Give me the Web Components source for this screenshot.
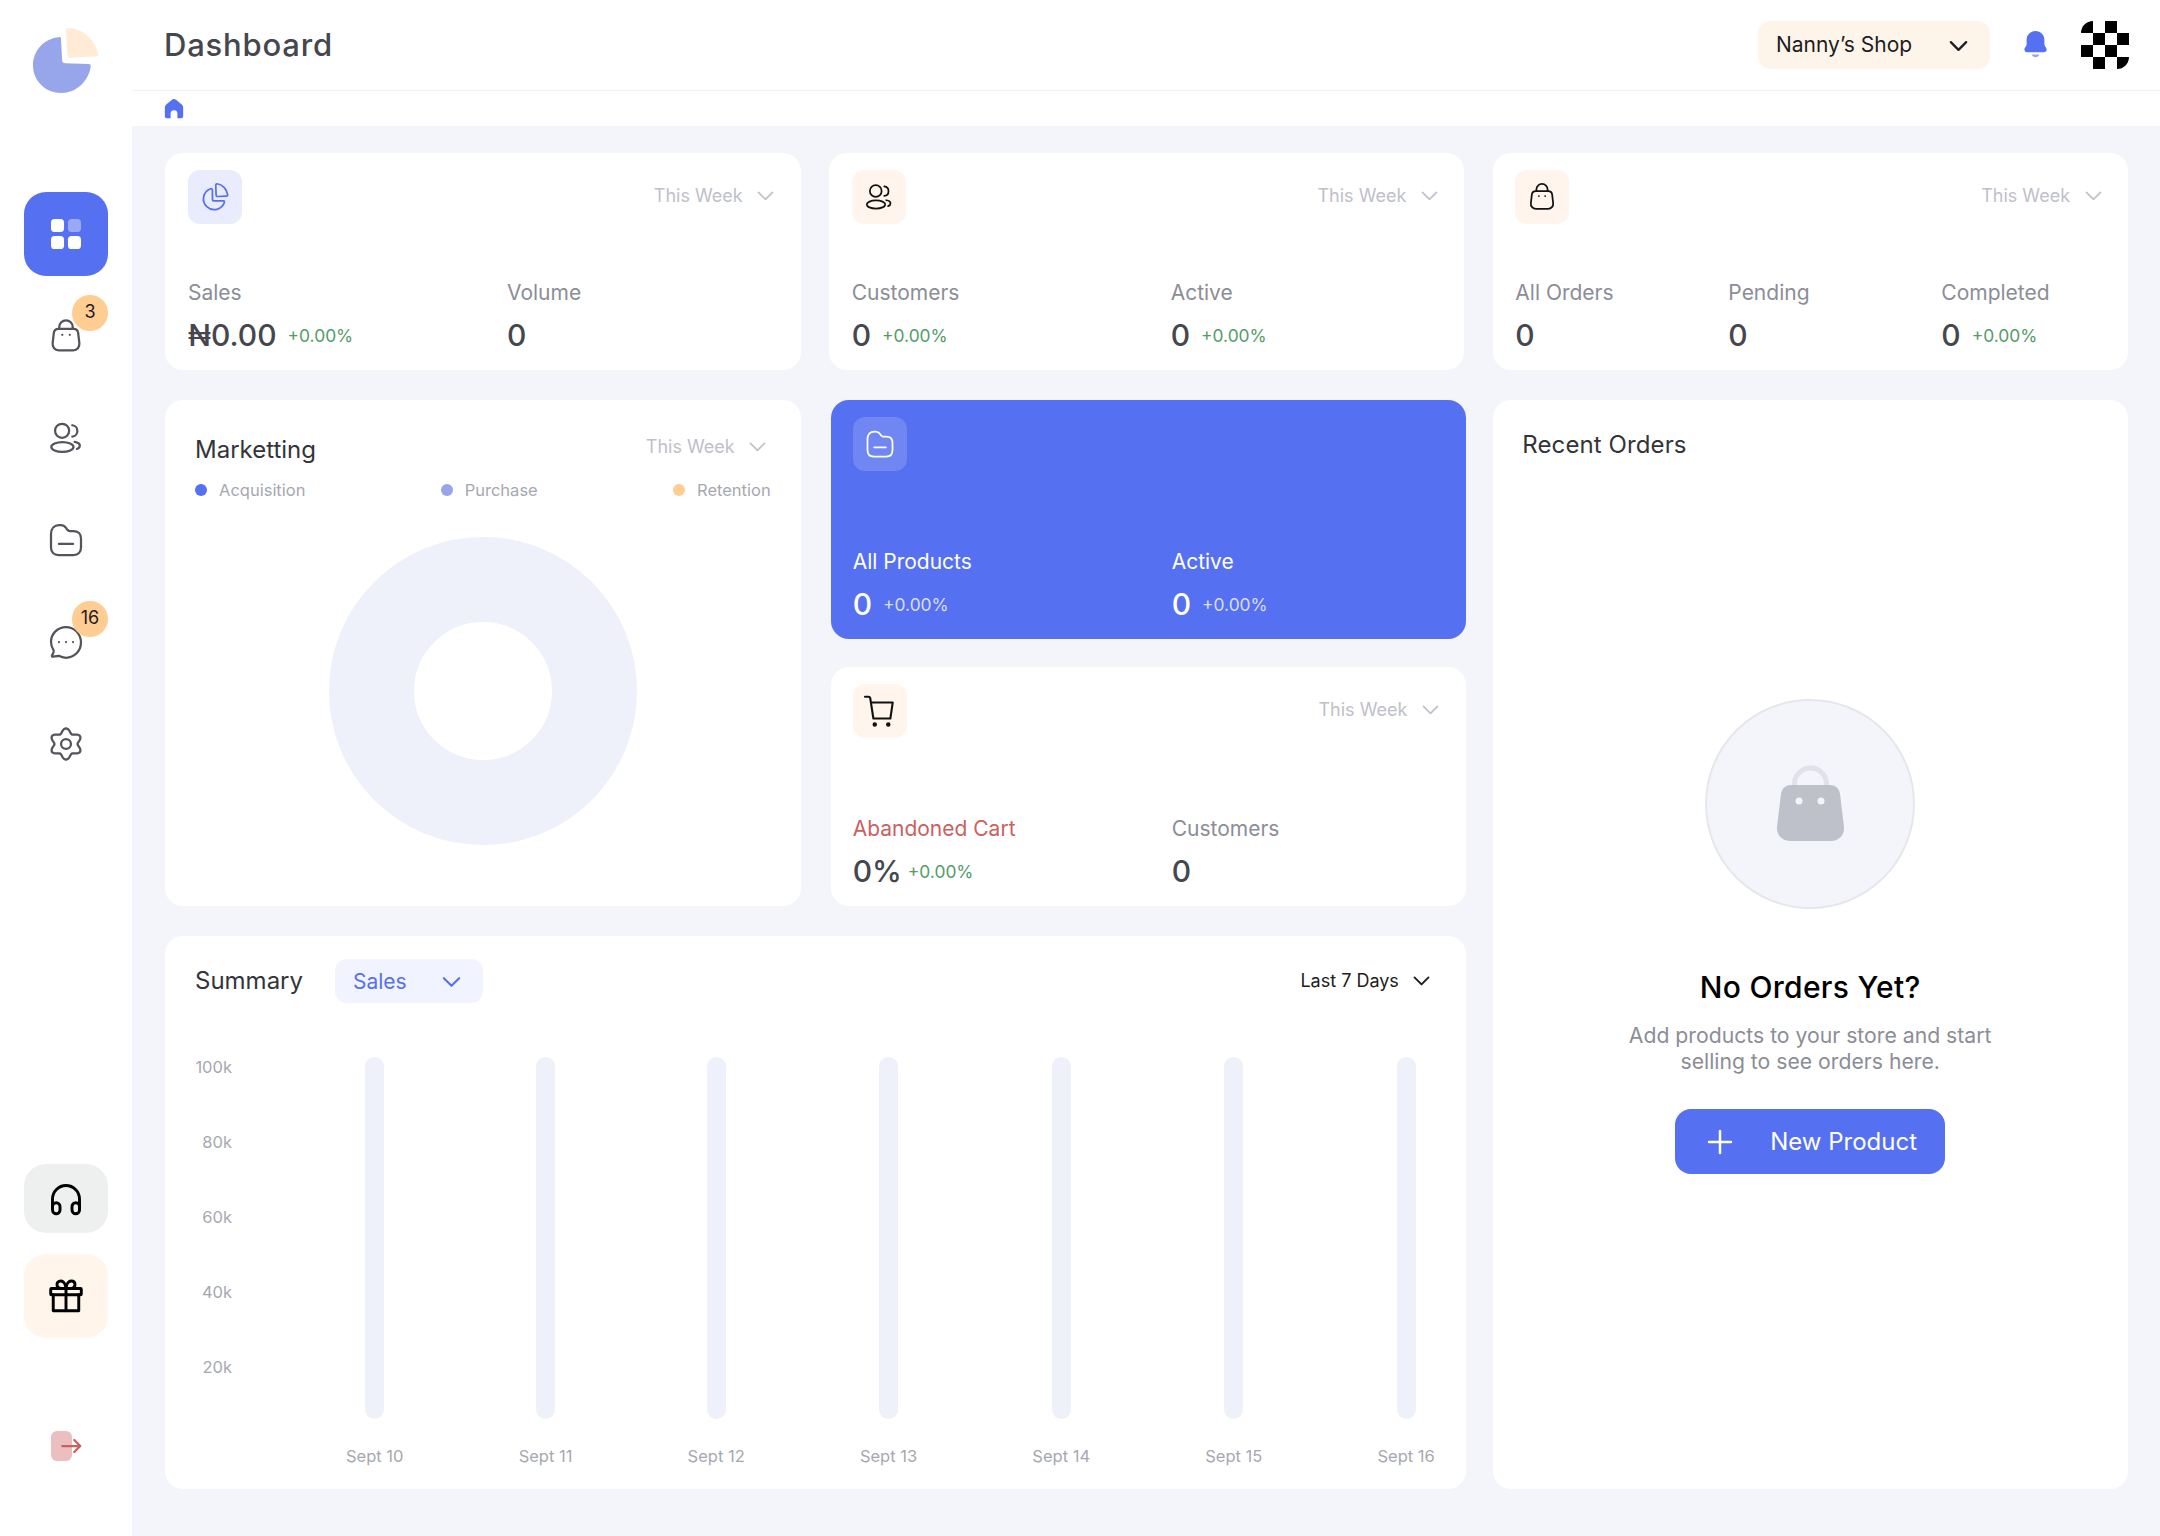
<!DOCTYPE html>
<html lang="en">
<head>
<meta charset="utf-8">
<title>Dashboard</title>
<style>
    html, body { margin: 0; padding: 0; background: #F4F5FA; }
    body { font-family: "Inter", "Liberation Sans", sans-serif; color: #45464E; }
</style>
</head>
<body>
<app-shell>
    <app-sidebar slot="side"></app-sidebar>
    <app-header slot="top" title="Dashboard" shop="Nanny’s Shop"></app-header>

    <stat-card icon="pie" tone="indigo" week>
        <stat-item label="Sales" value="₦0.00" delta="+0.00%"></stat-item>
        <stat-item label="Volume" value="0"></stat-item>
    </stat-card>
    <stat-card icon="users" tone="warm" week>
        <stat-item label="Customers" value="0" delta="+0.00%"></stat-item>
        <stat-item label="Active" value="0" delta="+0.00%"></stat-item>
    </stat-card>
    <stat-card icon="bag" tone="warm" week cols="3">
        <stat-item label="All Orders" value="0"></stat-item>
        <stat-item label="Pending" value="0"></stat-item>
        <stat-item label="Completed" value="0" delta="+0.00%"></stat-item>
    </stat-card>

    <marketing-card></marketing-card>

    <card-stack>
        <stat-card icon="folder" tone="blue">
            <stat-item label="All Products" value="0" delta="+0.00%"></stat-item>
            <stat-item label="Active" value="0" delta="+0.00%"></stat-item>
        </stat-card>
        <stat-card icon="cart" tone="warm" week>
            <stat-item label="Abandoned Cart" value="0%" delta="+0.00%" danger></stat-item>
            <stat-item label="Customers" value="0"></stat-item>
        </stat-card>
    </card-stack>

    <orders-card></orders-card>
    <summary-card></summary-card>
</app-shell>

<script>
// gear outline with six soft lobes
function gearPath() {
    let d = '';
    for (let i = 0; i <= 120; i++) {
        const a = (i / 120) * Math.PI * 2;
        const r = 8.9 + 1.5 * Math.cos(a * 6);
        const x = 12 + r * Math.sin(a) * 1.04;
        const y = 12 - r * Math.cos(a);
        d += (i ? 'L' : 'M') + x.toFixed(2) + ' ' + y.toFixed(2);
    }
    return d + 'Z';
}

const ICONS = {
    grid: `<g stroke="none"><rect x="2" y="2" width="8.7" height="8.7" rx="2.4" fill="#fff"/><rect x="13.3" y="2" width="8.7" height="8.7" rx="2.4" fill="#fff" opacity=".4"/><rect x="2" y="13.3" width="8.7" height="8.7" rx="2.4" fill="#fff"/><rect x="13.3" y="13.3" width="8.7" height="8.7" rx="2.4" fill="#fff"/></g>`,
    bag: `<path d="M7.5 7.2V6a4.5 4.5 0 0 1 9 0v1.2"/><path d="M7 7.2h10c1.7 0 2.9 1.1 3.1 2.7l.8 6.9c.3 2.6-1.5 4.7-4 4.7H7.1c-2.5 0-4.3-2.1-4-4.7l.8-6.9C4.1 8.3 5.3 7.2 7 7.2Z"/><path d="M9.5 11.2h.01M14.5 11.2h.01"/>`,
    users: `<circle cx="9.4" cy="7.2" r="4.7"/><ellipse cx="9.6" cy="18" rx="7.4" ry="3.3"/><path d="M16.2 3.5c1.9.2 3.4 1.8 3.4 3.8s-1.5 3.6-3.4 3.8"/><path d="M17.8 14.6c2 .3 3.4 1.2 3.4 2.5 0 .9-.7 1.7-1.9 2.2"/>`,
    folder: `<path d="M2 8c0-3.7 2.2-6 5.4-6h1.2c1.5 0 2.5.7 3.3 1.8l1 1.4c.4.5.8.8 1.6.8H17c3.1 0 5 1.9 5 5v6c0 3.1-1.9 5-5 5H7c-3.1 0-5-1.9-5-5V8Z"/><path d="M7.3 14.6h9.4"/>`,
    chat: `<path d="M12 2C6.5 2 2 6.4 2 11.9c0 2 .6 3.9 1.6 5.4.4.6.3 1.4-.1 2.1l-.8 1.4c-.3.5.1 1.1.6 1l3.9-.6c1.4.8 3 1.3 4.8 1.3 5.5 0 10-4.5 10-10.1C22 6.4 17.5 2 12 2Z"/><path d="M7.3 12h.01M12 12h.01M16.7 12h.01"/>`,
    gear: `<path d="${gearPath()}"/><circle cx="12" cy="12" r="3.3"/>`,
    headset: `<path d="M3 18v-6a9 9 0 0 1 18 0v6"/><rect x="3" y="14.5" width="5" height="7.3" rx="2.5"/><rect x="16" y="14.5" width="5" height="7.3" rx="2.5"/>`,
    gift: `<rect x="1.8" y="7" width="20.4" height="4.2" rx=".6"/><path d="M3.5 11.2v10.6h17V11.2"/><path d="M12 7v14.8"/><path d="M12 7S11.5 2 8.5 2C6.9 2 6 3.1 6 4.4 6 5.9 7 7 8.5 7"/><path d="M12 7s.5-5 3.5-5C17.1 2 18 3.1 18 4.4 18 5.9 17 7 15.5 7"/>`,
    logout: `<rect x="2" y="2" width="14" height="20" rx="4" fill="#CC5F5F" opacity=".4" stroke="none"/><path d="M9.5 12H21.5M17.5 8l4 4-4 4" stroke="#CC5F5F"/>`,
    pie: `<path d="M9.5 5.6c-.3-.3-.7-.3-1-.2A8.6 8.6 0 1 0 19.6 16c.1-.5-.1-.9-.6-1l-7.6.1c-.8 0-1.4-.6-1.4-1.4l-.1-7.5c0-.3-.1-.5-.4-.6Z"/><path d="M13.6 1.4c-.6 0-1 .4-1 1l.3 8.2c0 .6.5 1 1 1l7.3-.3c.6 0 1-.5.9-1.1-.6-4.7-4.1-8.3-8.5-8.8Z"/>`,
    cart: `<path d="M2 2.5h2.3c.6 0 1.1.4 1.2 1L7.6 17h11.3l1.6-10.7H6"/><path d="M8.5 21h.01M17.5 21h.01" stroke-width="3"/>`,
    chevron: `<path d="M4 8.5l8 8 8-8"/>`
};

function icon(name, size, color, width) {
    return `<svg part="icon" width="${size}" height="${size}" viewBox="0 0 24 24" fill="none" stroke="${color}" stroke-width="${width || 1.5}" stroke-linecap="round" stroke-linejoin="round">${ICONS[name]}</svg>`;
}

// Page frame
class AppShell extends HTMLElement {
    constructor() {
        super();
        this.attachShadow({ mode: 'open' });
        this.shadowRoot.innerHTML = `
            <style>
                :host { display: flex; width: 2160px; height: 1536px; overflow: hidden; }
                .main { flex: 1; min-width: 0; display: flex; flex-direction: column; }
                .board {
                    flex: 1;
                    display: grid;
                    grid-template-columns: repeat(3, minmax(0, 1fr));
                    grid-template-rows: 217px 506px 553px;
                    column-gap: 28px;
                    row-gap: 30px;
                    padding: 27px 32px 0 33px;
                }
            </style>
            <slot name="side"></slot>
            <div class="main">
                <slot name="top"></slot>
                <div class="board"><slot></slot></div>
            </div>
        `;
    }
}

class AppSidebar extends HTMLElement {
    constructor() {
        super();
        this.attachShadow({ mode: 'open' });
        this.shadowRoot.innerHTML = `
            <style>
                :host {
                    display: flex;
                    flex-direction: column;
                    align-items: center;
                    flex: 0 0 132px;
                    background: #fff;
                }
                .logo { display: block; width: 132px; height: 192px; }
                nav { display: flex; flex-direction: column; gap: 18px; }
                .bottom { margin-top: auto; padding-bottom: 72px; display: flex; flex-direction: column; align-items: center; }
            </style>
            <svg class="logo" viewBox="0 0 132 192">
                <path fill="#97A5EB" d="M59.5 37C44 38.5 33 50.5 33 65.5 33 81 45.5 93 61.5 93 76 93 88.5 81.5 90.7 66.5c.2-1.7-.8-2.5-2.3-2.5L65.5 63.3c-2 0-3.3-1.2-3.4-3.3L61 39c0-1.3-.5-2.2-1.5-2Z"/>
                <path fill="#FFEBD6" d="M66 30.5c0-1.5 1-2.5 2.5-2.5C83 28.5 95 40 98.3 54c.3 1.5-.5 2.5-2 2.6l-26 1.1c-1.5 0-2.7-1-2.8-2.5L66 30.5Z"/>
            </svg>
            <nav>
                <side-item icon="grid" kind="active"></side-item>
                <side-item icon="bag" badge="3"></side-item>
                <side-item icon="users"></side-item>
                <side-item icon="folder"></side-item>
                <side-item icon="chat" badge="16"></side-item>
                <side-item icon="gear"></side-item>
            </nav>
            <div class="bottom">
                <side-item icon="headset" kind="support"></side-item>
                <side-item icon="gift" kind="gift" style="margin-top:21px"></side-item>
                <side-item icon="logout" kind="plain" style="margin-top:90px"></side-item>
            </div>
        `;
    }
}

class SideItem extends HTMLElement {
    connectedCallback() {
        if (this.shadowRoot) return;
        this.attachShadow({ mode: 'open' });
        const kind = this.getAttribute('kind') || '';
        const badge = this.getAttribute('badge');
        const dark = kind === 'support' || kind === 'gift';
        this.shadowRoot.innerHTML = `
            <style>
                :host {
                    display: flex;
                    position: relative;
                    align-items: center;
                    justify-content: center;
                    width: 84px;
                    height: 84px;
                    border-radius: 22px;
                    font-family: "Inter", "Liberation Sans", sans-serif;
                }
                :host([kind="active"]) { background: #5570F1; }
                :host([kind="support"]) { background: #EEF0F0; height: 69px; }
                :host([kind="gift"]) { background: #FFF5EA; }
                :host([kind="plain"]) { height: 36px; }
                svg { display: block; }
                .badge {
                    position: absolute;
                    top: 1px;
                    right: 0;
                    width: 36px;
                    height: 36px;
                    border-radius: 50%;
                    background: #FFCC91;
                    color: #1C1D22;
                    font-size: 18px;
                    line-height: 34px;
                    text-align: center;
                }
            </style>
            ${icon(this.getAttribute('icon'), 36, dark ? '#000' : '#53545C', dark ? 1.95 : 1.5)}
            ${badge ? `<span class="badge">${badge}</span>` : ''}
        `;
    }
}

class AppHeader extends HTMLElement {
    connectedCallback() {
        if (this.shadowRoot) return;
        this.attachShadow({ mode: 'open' });
        let cells = '';
        for (let r = 0; r < 4; r++) {
            for (let c = 0; c < 4; c++) {
                if ((r + c) % 2 === 0) cells += `<rect x="${c * 12}" y="${r * 12}" width="12" height="12"/>`;
            }
        }
        this.shadowRoot.innerHTML = `
            <style>
                :host { display: block; background: #fff; }
                .bar {
                    height: 90px;
                    display: flex;
                    align-items: center;
                    padding: 0 31px 0 32px;
                    border-bottom: 1px solid #F1F3F9;
                }
                h1 {
                    margin: 0 auto 1px 0;
                    font: 500 31px "Inter", "Liberation Sans", sans-serif;
                    letter-spacing: .8px;
                    color: #45464E;
                }
                .shop {
                    display: flex;
                    align-items: center;
                    justify-content: space-between;
                    box-sizing: border-box;
                    width: 232px;
                    height: 48px;
                    padding: 0 20px 0 18px;
                    border-radius: 12px;
                    background: #FEF5EA;
                    color: #1C1D22;
                    font-size: 21px;
                }
                .shop span { margin-bottom: 1px; }
                .bell { margin: 0 32px 0 32px; display: block; }
                .avatar { display: block; border-radius: 12px; }
                .crumb { height: 35px; display: flex; align-items: center; padding-left: 31px; }
                .crumb svg { display: block; }
            </style>
            <div class="bar">
                <h1>${this.getAttribute('title')}</h1>
                <div class="shop"><span>${this.getAttribute('shop')}</span>${icon('chevron', 23, '#1C1D22', 2.4)}</div>
                <svg class="bell" width="27" height="30" viewBox="0 0 24 27">
                    <path fill="#5570F1" d="M12 1C7.500 1 4 4.300 4 9v3.500c0 1.200-.5 2.200-1.300 3.100-1.400 1.600-.6 4.400 1.800 4.400h15c2.400 0 3.200-2.800 1.800-4.400-.8-.9-1.300-1.900-1.300-3.100V9C20 4.300 16.500 1 12 1Z"/>
                    <path fill="#97A5EB" d="M8.500 22h7c-.5 1.500-2 2.500-3.500 2.500S9 23.500 8.500 22Z"/>
                </svg>
                <svg class="avatar" width="48" height="48" viewBox="0 0 48 48">${cells}</svg>
            </div>
            <div class="crumb">
                <svg width="22" height="22" viewBox="0 0 24 24"><path fill="#5570F1" d="M9.800 1.800 3.500 7C2.500 8 2 9 2 10.300V20c0 1.300.9 2.200 2.200 2.200h4.100V17a3.700 3.700 0 0 1 7.400 0v5.200h4.100c1.300 0 2.200-.9 2.200-2.200v-9.700c0-1.300-.5-2.300-1.500-3.300l-6.300-5.200c-1.300-1-3.100-1-4.400 0Z"/></svg>
            </div>
        `;
    }
}

class WeekSelect extends HTMLElement {
    connectedCallback() {
        if (this.shadowRoot) return;
        this.attachShadow({ mode: 'open' });
        const strong = this.hasAttribute('strong');
        this.shadowRoot.innerHTML = `
            <style>
                :host {
                    display: inline-flex;
                    align-items: center;
                    gap: 12.6px;
                    padding-right: 1.4px;
                    font-size: 18px;
                    color: ${strong ? '#1C1D22' : '#BEC0CA'};
                }
                svg { display: block; }
            </style>
            <span>${this.getAttribute('label') || 'This Week'}</span>
            ${icon('chevron', 21, strong ? '#1C1D22' : '#BEC0CA', strong ? 2.2 : 1.9)}
        `;
    }
}

class StatItem extends HTMLElement {
    connectedCallback() {
        if (this.shadowRoot) return;
        this.attachShadow({ mode: 'open' });
        const delta = this.getAttribute('delta');
        this.shadowRoot.innerHTML = `
            <style>
                :host { display: block; font-family: "Inter", "Liberation Sans", sans-serif; }
                .label {
                    font-size: 21px;
                    line-height: 26px;
                    color: var(--label-color, #8B8D97);
                    margin-bottom: 11px;
                }
                :host([danger]) .label { color: #CC5F5F; }
                :host([danger]) .row { gap: 6px; }
                .row { display: flex; align-items: center; gap: 11px; height: 36px; }
                .value { font-size: 30px; font-weight: 500; line-height: 36px; color: var(--value-color, #45464E); }
                .delta { font-size: 17.4px; color: var(--delta-color, #519C66); }
            </style>
            <div class="label">${this.getAttribute('label')}</div>
            <div class="row">
                <span class="value">${this.getAttribute('value')}</span>
                ${delta ? `<span class="delta">${delta}</span>` : ''}
            </div>
        `;
    }
}

class StatCard extends HTMLElement {
    connectedCallback() {
        if (this.shadowRoot) return;
        this.attachShadow({ mode: 'open' });
        const tone = this.getAttribute('tone');
        const name = this.getAttribute('icon');
        const three = this.getAttribute('cols') === '3';
        const stroke = { indigo: '#5570F1', warm: '#111', blue: '#fff' }[tone];
        const tile = { indigo: '#E9ECFD', warm: '#FFF5EC', blue: 'rgba(255,255,255,.16)' }[tone];
        this.shadowRoot.innerHTML = `
            <style>
                :host {
                    display: flex;
                    flex-direction: column;
                    justify-content: space-between;
                    box-sizing: border-box;
                    min-height: 0;
                    flex: 1;
                    padding: 17px 23px;
                    border-radius: 18px;
                    background: #fff;
                }
                :host([tone="blue"]) {
                    background: #5570F1;
                    --label-color: #fff;
                    --value-color: #fff;
                    --delta-color: #DBDFFA;
                }
                :host([cols="3"]) { margin-left: 1px; padding-left: 22px; }
                :host-context(card-stack) { padding-left: 22px; padding-right: 24px; }
                .head { display: flex; align-items: center; justify-content: space-between; }
                week-select { margin-bottom: 3px; }
                .tile {
                    display: flex;
                    align-items: center;
                    justify-content: center;
                    width: 54px;
                    height: 54px;
                    border-radius: 12px;
                    background: ${tile};
                }
                .items { display: grid; grid-template-columns: ${three ? '213px 213px 1fr' : '319px 1fr'}; }
                svg { display: block; }
            </style>
            <div class="head">
                <span class="tile">${icon(name, name === 'cart' ? 36 : 30, stroke, name === 'cart' ? 1.4 : 1.4)}</span>
                ${this.hasAttribute('week') ? '<week-select></week-select>' : ''}
            </div>
            <div class="items"><slot></slot></div>
        `;
    }
}

class CardStack extends HTMLElement {
    constructor() {
        super();
        this.attachShadow({ mode: 'open' });
        this.shadowRoot.innerHTML = `
            <style>
                :host { display: flex; flex-direction: column; gap: 28px; margin: 0 -2px 0 2px; min-height: 0; }
            </style>
            <slot></slot>
        `;
    }
}

class MarketingCard extends HTMLElement {
    constructor() {
        super();
        this.attachShadow({ mode: 'open' });
        this.shadowRoot.innerHTML = `
            <style>
                :host {
                    display: block;
                    box-sizing: border-box;
                    padding: 31px 30px 0;
                    border-radius: 18px;
                    background: #fff;
                }
                .head { display: flex; align-items: center; justify-content: space-between; height: 36px; }
                h2 { margin: 0; font-size: 24px; font-weight: 400; color: #33343A; }
                .legend {
                    display: flex;
                    justify-content: space-between;
                    margin-top: 11px;
                    font-size: 16.5px;
                    line-height: 24px;
                    color: #A6A8B1;
                }
                .legend span { display: flex; align-items: center; gap: 12px; }
                .legend i { width: 12px; height: 12px; border-radius: 50%; }
                svg.donut { display: block; margin: 35px auto 0; }
                week-select { margin: 0 1px 5px 0; }
            </style>
            <div class="head"><h2>Marketting</h2><week-select></week-select></div>
            <div class="legend">
                <span><i style="background:#5570F1"></i>Acquisition</span>
                <span><i style="background:#97A5EB"></i>Purchase</span>
                <span><i style="background:#FFCC91"></i>Retention</span>
            </div>
            <svg class="donut" width="308" height="308" viewBox="0 0 308 308">
                <circle cx="154" cy="154" r="111.5" fill="none" stroke="#EEF0FA" stroke-width="85"/>
            </svg>
        `;
    }
}

class SummaryCard extends HTMLElement {
    constructor() {
        super();
        this.attachShadow({ mode: 'open' });
        const ticks = ['100k', '80k', '60k', '40k', '20k'].map(t => `<span>${t}</span>`).join('');
        const bars = ['Sept 10', 'Sept 11', 'Sept 12', 'Sept 13', 'Sept 14', 'Sept 15', 'Sept 16']
            .map(d => `<div class="col"><i></i><span>${d}</span></div>`).join('');
        this.shadowRoot.innerHTML = `
            <style>
                :host {
                    display: block;
                    grid-column: span 2;
                    box-sizing: border-box;
                    margin-right: -2px;
                    padding: 23px 31.5px 0 30px;
                    border-radius: 18px;
                    background: #fff;
                }
                .head { display: flex; align-items: center; height: 44px; }
                h2 { margin: 0 32px 1px 0; font-size: 24px; font-weight: 400; color: #33343A; }
                .pick {
                    display: flex;
                    align-items: center;
                    justify-content: space-between;
                    box-sizing: border-box;
                    width: 148px;
                    height: 44px;
                    padding: 0 20px 0 18px;
                    border-radius: 12px;
                    background: #F1F4FF;
                    color: #5570F1;
                    font-size: 21px;
                }
                week-select { margin: 0 1px 2px auto; }
                .chart { display: flex; margin-top: 54px; }
                .axis {
                    display: flex;
                    flex-direction: column;
                    align-items: flex-end;
                    gap: 55px;
                    width: 37px;
                    font-size: 16.5px;
                    line-height: 20px;
                    color: #A6A8B1;
                }
                .plot { flex: 1; display: flex; justify-content: space-between; margin-left: 114px; }
                .col {
                    display: flex;
                    flex-direction: column;
                    align-items: center;
                    font-size: 16.5px;
                    color: #A6A8B1;
                }
                .col i { width: 19px; height: 362px; border-radius: 10px; background: #EEF0FA; }
                .col span { margin-top: 27px; line-height: 20px; white-space: nowrap; }
                svg { display: block; }
            </style>
            <div class="head">
                <h2>Summary</h2>
                <div class="pick"><span>Sales</span>${icon('chevron', 23, '#5570F1', 2.2)}</div>
                <week-select label="Last 7 Days" strong></week-select>
            </div>
            <div class="chart">
                <div class="axis">${ticks}</div>
                <div class="plot">${bars}</div>
            </div>
        `;
    }
}

class OrdersCard extends HTMLElement {
    constructor() {
        super();
        this.attachShadow({ mode: 'open' });
        this.shadowRoot.innerHTML = `
            <style>
                :host {
                    display: flex;
                    flex-direction: column;
                    grid-column: 3;
                    grid-row: 2 / span 2;
                    box-sizing: border-box;
                    margin-left: 1px;
                    padding: 31px 31px 0 30px;
                    border-radius: 18px;
                    background: #fff;
                }
                h2 { margin: 0 0 0 -1px; font-size: 24px; font-weight: 400; line-height: 28px; color: #33343A; letter-spacing: .1px; }
                .empty { display: flex; flex-direction: column; align-items: center; margin-top: 240px; }
                .round {
                    display: flex;
                    align-items: center;
                    justify-content: center;
                    box-sizing: border-box;
                    width: 210px;
                    height: 210px;
                    border-radius: 50%;
                    border: 2px solid #E6E7EE;
                    background: #F4F5FA;
                }
                h3 { margin: 58px 0 0; font-size: 30px; font-weight: 500; line-height: 40px; color: #000; letter-spacing: .3px; }
                p {
                    margin: 15px 0 0;
                    width: 400px;
                    font-size: 21.2px;
                    line-height: 26px;
                    text-align: center;
                    color: #8B8D97;
                }
                button {
                    display: flex;
                    align-items: center;
                    box-sizing: border-box;
                    width: 270px;
                    height: 65px;
                    margin-top: 35px;
                    padding: 0 0 0 32px;
                    border: 0;
                    border-radius: 16px;
                    background: #5570F1;
                    color: #fff;
                    font: 400 24px "Inter", "Liberation Sans", sans-serif;
                }
                button svg { margin-right: 37px; }
            </style>
            <h2>Recent Orders</h2>
            <div class="empty">
                <div class="round">
                    <svg width="67" height="75" viewBox="0 0 67 75" style="display:block;overflow:visible">
                        <path fill="none" stroke="#E1E2E9" stroke-width="5" d="M17.5 20V17a16 16 0 0 1 32 0v3"/>
                        <path fill="#BEC0CA" d="M14 18h39c5 0 9 3 10 9l4 33c.5 8-5 14-13 14H13C5 74-.5 68 0 60l4-33c1-6 5-9 10-9Z"/>
                        <circle cx="22" cy="34" r="3.5" fill="#F4F5FA"/>
                        <circle cx="44" cy="34" r="3.5" fill="#F4F5FA"/>
                    </svg>
                </div>
                <h3>No Orders Yet?</h3>
                <p>Add products to your store and start selling to see orders here.</p>
                <button type="button">
                    <svg width="26" height="26" viewBox="0 0 26 26" fill="none" stroke="#fff" stroke-width="2.5" stroke-linecap="round"><path d="M13 2v22M2 13h22"/></svg>
                    New Product
                </button>
            </div>
        `;
    }
}

customElements.define('app-shell', AppShell);
customElements.define('app-sidebar', AppSidebar);
customElements.define('side-item', SideItem);
customElements.define('app-header', AppHeader);
customElements.define('week-select', WeekSelect);
customElements.define('stat-item', StatItem);
customElements.define('stat-card', StatCard);
customElements.define('card-stack', CardStack);
customElements.define('marketing-card', MarketingCard);
customElements.define('summary-card', SummaryCard);
customElements.define('orders-card', OrdersCard);
</script>
</body>
</html>
